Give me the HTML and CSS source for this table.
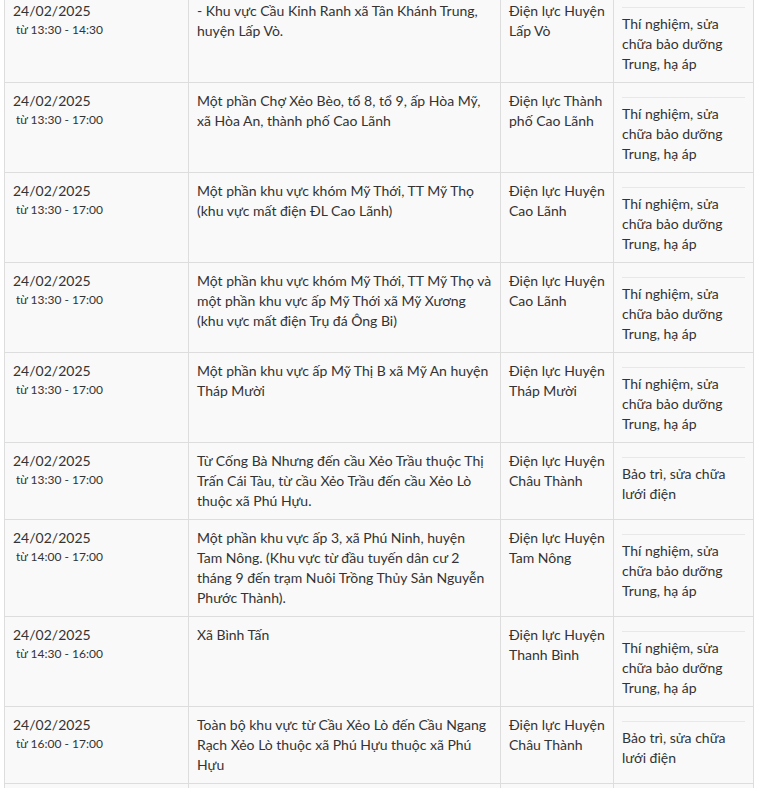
FILE: index.html
```html
<!DOCTYPE html>
<html lang="vi">
<head>
<meta charset="utf-8">
<title>Lịch cắt điện</title>
<link rel="stylesheet" href="styles.css">
</head>
<body>
<table class="schedule">
  <colgroup>
    <col class="c-time">
    <col class="c-area">
    <col class="c-unit">
    <col class="c-reason">
  </colgroup>
  <tbody>
    <tr>
      <td><div class="date">24/02/2025</div><div class="time">từ 13:30 - 14:30</div></td>
      <td>- Khu vực Cầu Kinh Ranh xã Tân Khánh Trung, huyện Lấp Vò.</td>
      <td>Điện lực Huyện Lấp Vò</td>
      <td><div class="rule"></div>Thí nghiệm, sửa chữa bảo dưỡng Trung, hạ áp</td>
    </tr>
    <tr>
      <td><div class="date">24/02/2025</div><div class="time">từ 13:30 - 17:00</div></td>
      <td>Một phần Chợ Xẻo Bèo, tổ 8, tổ 9, ấp Hòa Mỹ, xã Hòa An, thành phố Cao Lãnh</td>
      <td>Điện lực Thành phố Cao Lãnh</td>
      <td><div class="rule"></div>Thí nghiệm, sửa chữa bảo dưỡng Trung, hạ áp</td>
    </tr>
    <tr>
      <td><div class="date">24/02/2025</div><div class="time">từ 13:30 - 17:00</div></td>
      <td>Một phần khu vực khóm Mỹ Thới, TT Mỹ Thọ (khu vực mất điện ĐL Cao Lãnh)</td>
      <td>Điện lực Huyện Cao Lãnh</td>
      <td><div class="rule"></div>Thí nghiệm, sửa chữa bảo dưỡng Trung, hạ áp</td>
    </tr>
    <tr>
      <td><div class="date">24/02/2025</div><div class="time">từ 13:30 - 17:00</div></td>
      <td>Một phần khu vực khóm Mỹ Thới, TT Mỹ Thọ và một phần khu vực ấp Mỹ Thới xã Mỹ Xương (khu vực mất điện Trụ đá Ông Bi)</td>
      <td>Điện lực Huyện Cao Lãnh</td>
      <td><div class="rule"></div>Thí nghiệm, sửa chữa bảo dưỡng Trung, hạ áp</td>
    </tr>
    <tr>
      <td><div class="date">24/02/2025</div><div class="time">từ 13:30 - 17:00</div></td>
      <td>Một phần khu vực ấp Mỹ Thị B xã Mỹ An huyện Tháp Mười</td>
      <td>Điện lực Huyện Tháp Mười</td>
      <td><div class="rule"></div>Thí nghiệm, sửa chữa bảo dưỡng Trung, hạ áp</td>
    </tr>
    <tr>
      <td><div class="date">24/02/2025</div><div class="time">từ 13:30 - 17:00</div></td>
      <td>Từ Cống Bà Nhưng đến cầu Xẻo Trầu thuộc Thị Trấn Cái Tàu, từ cầu Xẻo Trầu đến cầu Xẻo Lò thuộc xã Phú Hựu.</td>
      <td>Điện lực Huyện Châu Thành</td>
      <td><div class="rule"></div>Bảo trì, sửa chữa lưới điện</td>
    </tr>
    <tr>
      <td><div class="date">24/02/2025</div><div class="time">từ 14:00 - 17:00</div></td>
      <td>Một phần khu vực ấp 3, xã Phú Ninh, huyện Tam Nông. (Khu vực từ đầu tuyến dân cư 2 tháng 9 đến trạm Nuôi Trồng Thủy Sản Nguyễn Phước Thành).</td>
      <td>Điện lực Huyện Tam Nông</td>
      <td><div class="rule"></div>Thí nghiệm, sửa chữa bảo dưỡng Trung, hạ áp</td>
    </tr>
    <tr>
      <td><div class="date">24/02/2025</div><div class="time">từ 14:30 - 16:00</div></td>
      <td>Xã Bình Tấn</td>
      <td>Điện lực Huyện Thanh Bình</td>
      <td><div class="rule"></div>Thí nghiệm, sửa chữa bảo dưỡng Trung, hạ áp</td>
    </tr>
    <tr>
      <td><div class="date">24/02/2025</div><div class="time">từ 16:00 - 17:00</div></td>
      <td>Toàn bộ khu vực từ Cầu Xẻo Lò đến Cầu Ngang Rạch Xẻo Lò thuộc xã Phú Hựu thuộc xã Phú Hựu</td>
      <td>Điện lực Huyện Châu Thành</td>
      <td><div class="rule"></div>Bảo trì, sửa chữa lưới điện</td>
    </tr>
    <tr>
      <td class="empty"></td>
      <td class="empty"></td>
      <td class="empty"></td>
      <td class="empty"></td>
    </tr>
  </tbody>
</table>
</body>
</html>
```

FILE: styles.css
```css
html, body {
  margin: 0;
  padding: 0;
  background: #ffffff;
}

body {
  font-family: "Lato", "Liberation Sans", sans-serif;
  font-size: 14px;
  line-height: 20px;
  color: #333333;
  overflow: hidden;
}

.schedule {
  border-collapse: collapse;
  table-layout: fixed;
  width: 749px;
  margin: -8px 0 0 4px;
  background: #f9f9f9;
}

.c-time { width: 184px; }
.c-area { width: 312px; }
.c-unit { width: 113px; }
.c-reason { width: 140px; }

.schedule td {
  border: 1px solid #dddddd;
  padding: 8px;
  vertical-align: top;
}

.schedule td.empty {
  height: 40px;
}

.date {
  line-height: 20px;
}

.time {
  font-size: 12px;
  line-height: 18px;
  padding-left: 3px;
}

.rule {
  border-top: 1px solid #e8e8e8;
  margin: 6px 0 6px;
}
```
